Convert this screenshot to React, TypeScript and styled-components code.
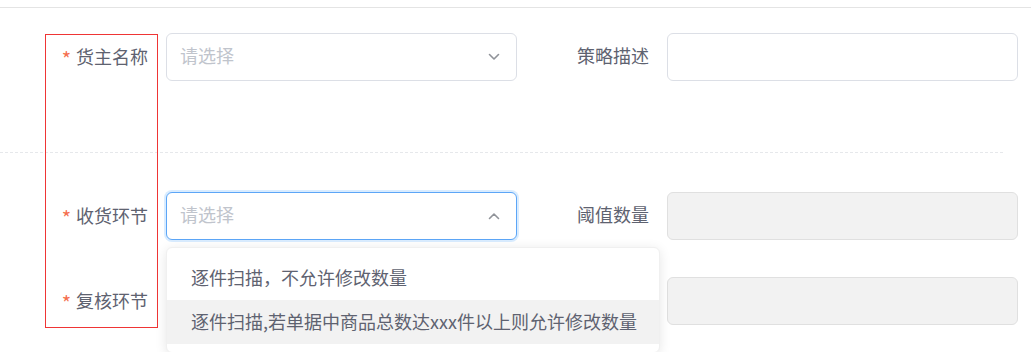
import React from 'react'
import styled, { createGlobalStyle, css } from 'styled-components'

const GlobalStyle = createGlobalStyle`
  body {
    margin: 0;
    background: #fff;
    font-family: "Noto Sans CJK SC", "Noto Sans", "Liberation Sans", sans-serif;
  }
`

const Page = styled.div`
  position: relative;
  width: 1031px;
  height: 352px;
  overflow: hidden;
  padding-top: 7px;
  box-sizing: border-box;
`

const Form = styled.form`
  border-top: 1px solid #e4e4e4;
  padding-top: 25px;
`

const Section = styled.div<{ $top?: number; $bottom?: number }>`
  display: grid;
  grid-template-columns: 469px 469px;
  column-gap: 32px;
  row-gap: 37px;
  padding-left: 48px;
  padding-top: ${(p) => p.$top || 0}px;
  padding-bottom: ${(p) => p.$bottom || 0}px;
`

const Divider = styled.div`
  margin-right: 28px;
  border-top: 1px dashed #e6e8eb;
`

const Item = styled.div`
  display: flex;
  align-items: center;
`

const Label = styled.label`
  position: relative;
  top: -2px;
  width: 118px;
  padding-right: 18px;
  box-sizing: border-box;
  text-align: right;
  font-size: 18px;
  color: #5e6270;
  white-space: nowrap;
`

const Star = styled.span`
  position: relative;
  top: 3px;
  color: #f5704f;
  font-size: 20px;
  margin-right: 5px;
`

const Control = styled.div`
  position: relative;
  width: 351px;
`

const Box = styled.div<{ $focus?: boolean; $disabled?: boolean }>`
  height: 48px;
  box-sizing: border-box;
  border: 1px solid #dcdfe6;
  border-radius: 6px;
  background: #fff;
  display: flex;
  align-items: center;
  justify-content: space-between;
  padding: 0 16px 0 13px;
  ${(p) =>
    p.$focus &&
    css`
      border-color: #5ca6f7;
      box-shadow: 0 0 0 2px rgba(64, 158, 255, 0.2);
    `}
  ${(p) =>
    p.$disabled &&
    css`
      background: #f2f2f2;
      border-color: #e0e0e0;
    `}
`

const Placeholder = styled.span`
  position: relative;
  top: -2px;
  font-size: 18px;
  color: #c0c4cc;
`

const Menu = styled.ul`
  position: absolute;
  z-index: 10;
  top: 55px;
  left: 0;
  width: 494px;
  margin: 0;
  padding: 8px 0;
  list-style: none;
  background: #fff;
  border: 1px solid #f0f0f0;
  border-radius: 6px;
  box-shadow: 0 2px 12px rgba(0, 0, 0, 0.1);
  box-sizing: border-box;
`

const Option = styled.li<{ $hover?: boolean }>`
  height: 44px;
  line-height: 42px;
  padding: 0 24px 2px;
  box-sizing: border-box;
  font-size: 18px;
  color: #5e6270;
  white-space: nowrap;
  background: ${(p) => (p.$hover ? '#f2f2f2' : 'transparent')};
`

const Marker = styled.div`
  position: absolute;
  left: 45px;
  top: 34px;
  width: 113px;
  height: 294px;
  border: 1px solid #ef3535;
  box-sizing: border-box;
  pointer-events: none;
`

const Chevron = ({ up }: { up?: boolean }) => (
  <svg width="12" height="8" viewBox="0 0 12 8">
    <path
      d={up ? 'M1.5 6.5 L6 2 L10.5 6.5' : 'M1.5 1.5 L6 6 L10.5 1.5'}
      fill="none"
      stroke="#909399"
      strokeWidth="1.6"
      strokeLinecap="round"
      strokeLinejoin="round"
    />
  </svg>
)

const Required = ({ children }: { children: string }) => (
  <Label>
    <Star>*</Star>
    {children}
  </Label>
)

const App = () => (
  <Page>
    <GlobalStyle />
    <Form>
      <Section $bottom={71}>
        <Item>
          <Required>货主名称</Required>
          <Control>
            <Box>
              <Placeholder>请选择</Placeholder>
              <Chevron />
            </Box>
          </Control>
        </Item>
        <Item>
          <Label>策略描述</Label>
          <Control>
            <Box />
          </Control>
        </Item>
      </Section>
      <Divider />
      <Section $top={39}>
        <Item>
          <Required>收货环节</Required>
          <Control>
            <Box $focus>
              <Placeholder>请选择</Placeholder>
              <Chevron up />
            </Box>
            <Menu>
              <Option>逐件扫描，不允许修改数量</Option>
              <Option $hover>逐件扫描,若单据中商品总数达xxx件以上则允许修改数量</Option>
            </Menu>
          </Control>
        </Item>
        <Item>
          <Label>阈值数量</Label>
          <Control>
            <Box $disabled />
          </Control>
        </Item>
        <Item>
          <Required>复核环节</Required>
          <Control>
            <Box />
          </Control>
        </Item>
        <Item>
          <Label />
          <Control>
            <Box $disabled />
          </Control>
        </Item>
      </Section>
    </Form>
    <Marker />
  </Page>
)

export default App
